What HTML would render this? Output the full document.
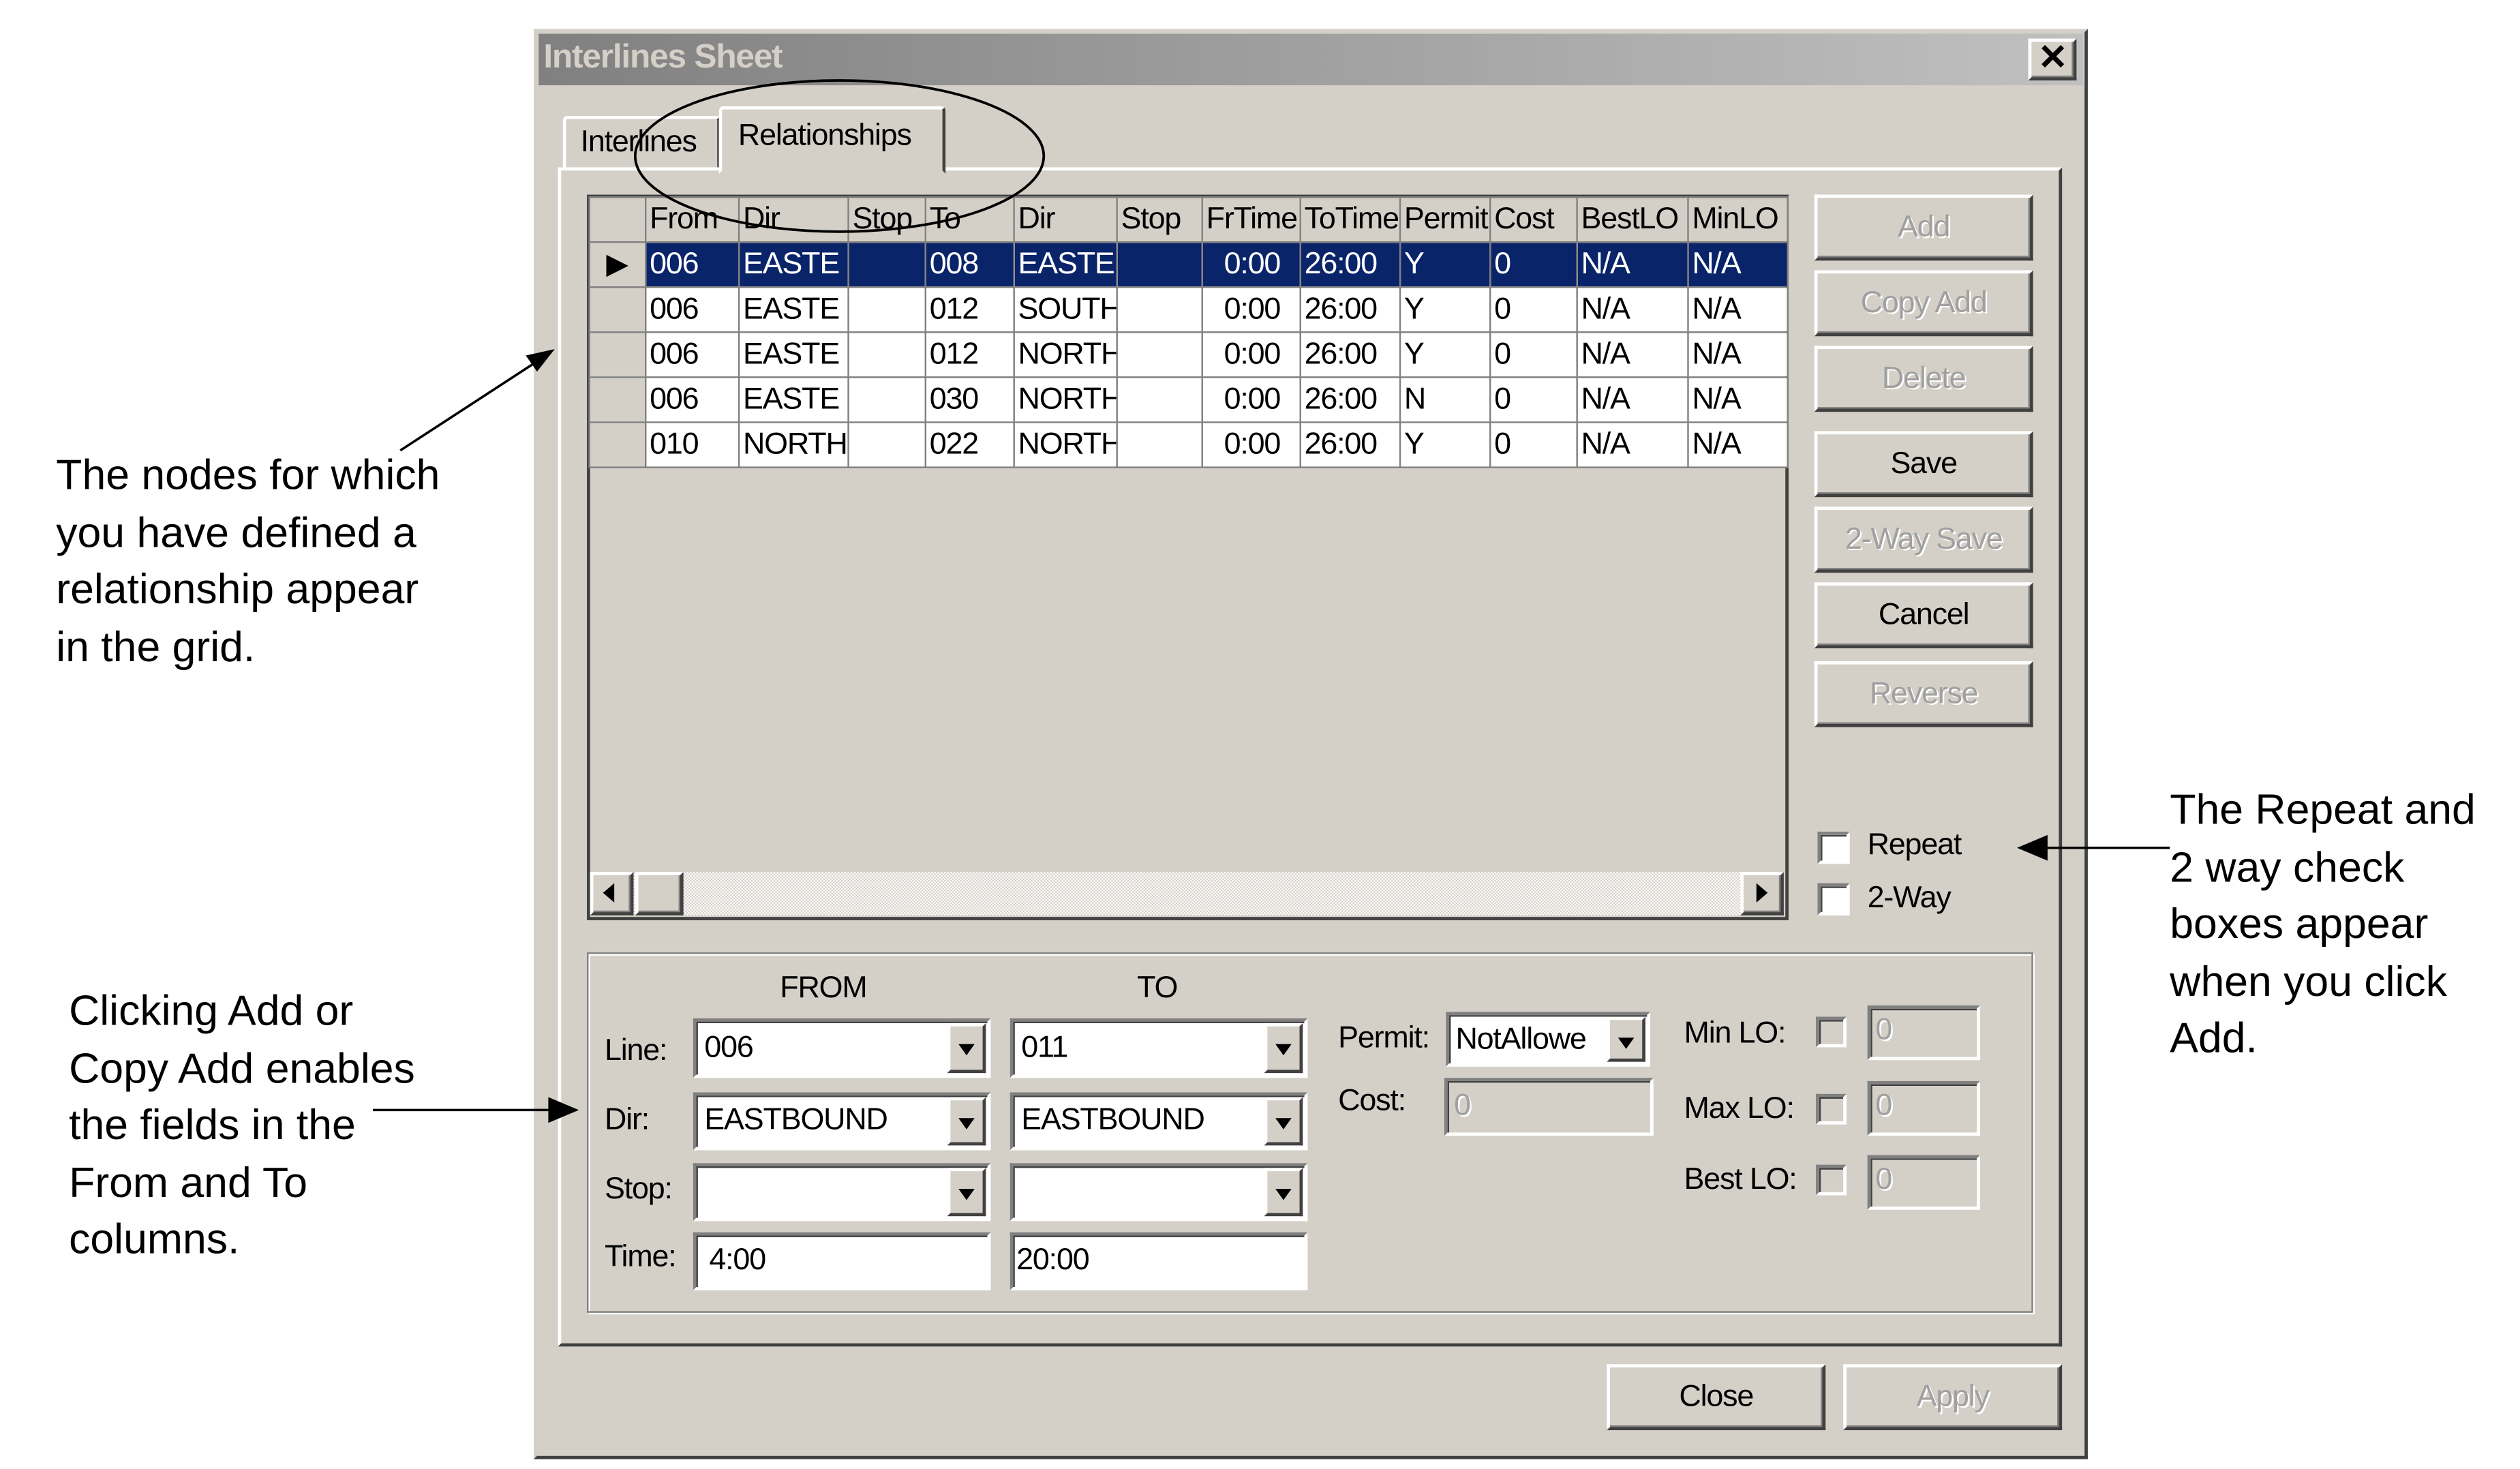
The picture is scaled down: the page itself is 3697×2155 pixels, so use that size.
<!DOCTYPE html>
<html><head><meta charset="utf-8">
<style>
html,body{margin:0;padding:0;background:#fff;overflow:hidden}
body{width:3697px;height:2155px}
#w{position:absolute;left:2px;top:0;width:1560px;height:909px;transform:scale(2.36,2.36);transform-origin:0 0;font-family:"Liberation Sans",sans-serif}
.a{position:absolute;box-sizing:border-box}
.t{position:absolute;white-space:nowrap;font-size:19px;color:#000;letter-spacing:-0.5px}
.btn{position:absolute;box-sizing:border-box;background:#d4d0c8;border:2px solid;border-color:#fff #404040 #404040 #fff;box-shadow:inset -1px -1px 0 #808080;text-align:center;font-size:19px;letter-spacing:-0.5px}
.dis{color:#a0a0a0;text-shadow:1px 1px 0 #fff}
.sunk{position:absolute;box-sizing:border-box;background:#fff;border:2px solid;border-color:#808080 #fff #fff #808080;box-shadow:inset 1px 1px 0 #404040}
.sunk.g{background:#d4d0c8}
.dd{position:absolute;right:1px;top:1px;bottom:1px;width:24px;background:#d4d0c8;border:2px solid;border-color:#fff #404040 #404040 #fff;box-sizing:border-box}
.dd:after{content:"";position:absolute;left:5px;top:11px;border:5px solid transparent;border-top:7px solid #000;border-bottom:0}
.ann{position:absolute;font-size:26.5px;line-height:35.5px;color:#000;white-space:nowrap}
table{border-collapse:collapse;font-size:19px;letter-spacing:-0.5px}
td{border:1px solid #808080;padding:0 0 0 2px;height:28px;overflow:hidden;white-space:nowrap;box-sizing:border-box}
.cb{position:absolute;width:19px;height:19px;box-sizing:border-box;background:#fff;border:2px solid;border-color:#808080 #fff #fff #808080;box-shadow:inset 1px 1px 0 #404040}
.cbg{background:#d4d0c8}
</style></head><body><div id="w">

<div class="a" style="left:331px;top:18px;width:966px;height:889px;background:#d4d0c8;border:2px solid;border-color:#d4d0c8 #404040 #404040 #d4d0c8"></div>
<div class="a" style="left:334px;top:21px;width:960px;height:32px;background:linear-gradient(90deg,#808080,#c0c0c0)"></div>
<div class="t" style="left:337px;top:24px;font-weight:bold;color:#d4d0c8;font-size:21px">Interlines Sheet</div>
<div class="btn" style="left:1260px;top:24px;width:30px;height:26px;font-size:22px;line-height:20px;font-weight:bold">✕</div>

<div class="a" style="left:349px;top:72px;width:98px;height:34px;border:2px solid;border-color:#fff #404040 transparent #fff;border-radius:3px 3px 0 0"></div>
<div class="t" style="left:360px;top:78px">Interlines</div>
<div class="a" style="left:346px;top:104px;width:935px;height:733px;border:2px solid;border-color:#fff #404040 #404040 #fff"></div>
<div class="a" style="left:446px;top:66px;width:141px;height:42px;background:#d4d0c8;border:2px solid;border-color:#fff #404040 transparent #fff;border-radius:3px 3px 0 0"></div>
<div class="t" style="left:458px;top:74px">Relationships</div>

<div class="a" style="left:364px;top:121px;width:747px;height:451px;background:#d4d0c8;border:2px solid #404040"></div>
<table class="a" style="left:365px;top:122px;table-layout:fixed;width:745px">
<colgroup><col style="width:35px"><col style="width:58px"><col style="width:68px"><col style="width:48px"><col style="width:55px"><col style="width:64px"><col style="width:53px"><col style="width:61px"><col style="width:62px"><col style="width:56px"><col style="width:54px"><col style="width:69px"><col style="width:62px"></colgroup>
<tr style="background:#d4d0c8"><td></td><td>From</td><td>Dir</td><td>Stop</td><td>To</td><td>Dir</td><td>Stop</td><td>FrTime</td><td>ToTime</td><td>Permit</td><td>Cost</td><td>BestLO</td><td>MinLO</td></tr>
<tr style="background:#0a246a;color:#fff"><td style="background:#d4d0c8;color:#000;font-size:18px;padding-left:10px">▶</td><td>006</td><td>EASTE</td><td></td><td>008</td><td>EASTE</td><td></td><td style="text-align:right;padding-right:12px">0:00</td><td>26:00</td><td>Y</td><td>0</td><td>N/A</td><td>N/A</td></tr>
<tr style="background:#fff"><td style="background:#d4d0c8"></td><td>006</td><td>EASTE</td><td></td><td>012</td><td>SOUTH</td><td></td><td style="text-align:right;padding-right:12px">0:00</td><td>26:00</td><td>Y</td><td>0</td><td>N/A</td><td>N/A</td></tr>
<tr style="background:#fff"><td style="background:#d4d0c8"></td><td>006</td><td>EASTE</td><td></td><td>012</td><td>NORTH</td><td></td><td style="text-align:right;padding-right:12px">0:00</td><td>26:00</td><td>Y</td><td>0</td><td>N/A</td><td>N/A</td></tr>
<tr style="background:#fff"><td style="background:#d4d0c8"></td><td>006</td><td>EASTE</td><td></td><td>030</td><td>NORTH</td><td></td><td style="text-align:right;padding-right:12px">0:00</td><td>26:00</td><td>N</td><td>0</td><td>N/A</td><td>N/A</td></tr>
<tr style="background:#fff"><td style="background:#d4d0c8"></td><td>010</td><td>NORTH</td><td></td><td>022</td><td>NORTH</td><td></td><td style="text-align:right;padding-right:12px">0:00</td><td>26:00</td><td>Y</td><td>0</td><td>N/A</td><td>N/A</td></tr>
</table>
<div class="a" style="left:366px;top:542px;width:742px;height:27px;background:repeating-conic-gradient(#d4d0c8 0 25%,#fff 0 50%) 0 0/2px 2px"></div>
<div class="btn" style="left:366px;top:542px;width:27px;height:27px"></div>
<div class="a" style="left:374px;top:549px;border:6px solid transparent;border-right:7px solid #000;border-left:0"></div>
<div class="btn" style="left:394px;top:542px;width:30px;height:27px"></div>
<div class="btn" style="left:1081px;top:542px;width:27px;height:27px"></div>
<div class="a" style="left:1091px;top:549px;border:6px solid transparent;border-left:7px solid #000;border-right:0"></div>

<div class="btn dis" style="left:1127px;top:121px;width:136px;height:41px;line-height:37px">Add</div>
<div class="btn dis" style="left:1127px;top:168px;width:136px;height:41px;line-height:37px">Copy Add</div>
<div class="btn dis" style="left:1127px;top:215px;width:136px;height:41px;line-height:37px">Delete</div>
<div class="btn" style="left:1127px;top:268px;width:136px;height:41px;line-height:37px">Save</div>
<div class="btn dis" style="left:1127px;top:315px;width:136px;height:41px;line-height:37px">2-Way Save</div>
<div class="btn" style="left:1127px;top:362px;width:136px;height:41px;line-height:37px">Cancel</div>
<div class="btn dis" style="left:1127px;top:411px;width:136px;height:41px;line-height:37px">Reverse</div>

<div class="cb" style="left:1129px;top:517px;width:20px;height:20px"></div>
<div class="t" style="left:1160px;top:515px">Repeat</div>
<div class="cb" style="left:1129px;top:549px;width:20px;height:20px"></div>
<div class="t" style="left:1160px;top:548px">2-Way</div>

<div class="a" style="left:364px;top:592px;width:899px;height:224px;border:1px solid #808080;box-shadow:1px 1px 0 #fff, inset 1px 1px 0 #fff"></div>
<div class="t" style="left:484px;top:604px">FROM</div>
<div class="t" style="left:706px;top:604px">TO</div>

<div class="t" style="left:375px;top:643px">Line:</div>
<div class="sunk" style="left:430px;top:633px;width:185px;height:37px"><span class="t" style="left:5px;top:6px">006</span><div class="dd"></div></div>
<div class="sunk" style="left:627px;top:633px;width:185px;height:37px"><span class="t" style="left:5px;top:6px">011</span><div class="dd"></div></div>
<div class="t" style="left:375px;top:686px">Dir:</div>
<div class="sunk" style="left:430px;top:679px;width:185px;height:36px"><span class="t" style="left:5px;top:5px">EASTBOUND</span><div class="dd"></div></div>
<div class="sunk" style="left:627px;top:679px;width:185px;height:36px"><span class="t" style="left:5px;top:5px">EASTBOUND</span><div class="dd"></div></div>
<div class="t" style="left:375px;top:729px">Stop:</div>
<div class="sunk" style="left:430px;top:723px;width:185px;height:36px"><div class="dd"></div></div>
<div class="sunk" style="left:627px;top:723px;width:185px;height:36px"><div class="dd"></div></div>
<div class="t" style="left:375px;top:771px">Time:</div>
<div class="sunk" style="left:430px;top:766px;width:185px;height:36px"><span class="t" style="left:8px;top:5px">4:00</span></div>
<div class="sunk" style="left:627px;top:766px;width:185px;height:36px"><span class="t" style="left:2px;top:5px">20:00</span></div>

<div class="t" style="left:831px;top:635px">Permit:</div>
<div class="sunk" style="left:898px;top:629px;width:127px;height:34px"><span class="t" style="left:4px;top:5px">NotAllowe</span><div class="dd"></div></div>
<div class="t" style="left:831px;top:674px">Cost:</div>
<div class="sunk g" style="left:897px;top:670px;width:130px;height:36px"><span class="t dis" style="left:4px;top:5px">0</span></div>

<div class="t" style="left:1046px;top:632px">Min LO:</div>
<div class="cb cbg" style="left:1128px;top:632px"></div>
<div class="sunk g" style="left:1160px;top:625px;width:70px;height:34px"><span class="t dis" style="left:3px;top:3px">0</span></div>
<div class="t" style="left:1046px;top:679px">Max LO:</div>
<div class="cb cbg" style="left:1128px;top:680px"></div>
<div class="sunk g" style="left:1160px;top:672px;width:70px;height:34px"><span class="t dis" style="left:3px;top:3px">0</span></div>
<div class="t" style="left:1046px;top:723px">Best LO:</div>
<div class="cb cbg" style="left:1128px;top:724px"></div>
<div class="sunk g" style="left:1160px;top:718px;width:70px;height:34px"><span class="t dis" style="left:3px;top:3px">0</span></div>

<div class="btn" style="left:998px;top:848px;width:136px;height:41px;line-height:37px">Close</div>
<div class="btn dis" style="left:1145px;top:848px;width:136px;height:41px;line-height:37px">Apply</div>

<svg class="a" style="left:0;top:0" width="1560" height="909" viewBox="0 0 1560 909">
<ellipse cx="521" cy="97" rx="127" ry="47" fill="none" stroke="#000" stroke-width="1.6"/>
<line x1="248" y1="280" x2="334" y2="224" stroke="#000" stroke-width="1.5"/>
<polygon points="344,217 326,221 333,231" fill="#000"/>
<line x1="1348" y1="527" x2="1268" y2="527" stroke="#000" stroke-width="1.5"/>
<polygon points="1253,527 1272,519 1272,535" fill="#000"/>
<line x1="231" y1="690" x2="344" y2="690" stroke="#000" stroke-width="1.5"/>
<polygon points="359,690 340,682 340,698" fill="#000"/>
</svg>
<div class="ann" style="left:34px;top:278px">The nodes for which<br>you have defined a<br>relationship appear<br>in the grid.</div>
<div class="ann" style="left:1348px;top:486px">The Repeat and<br>2 way check<br>boxes appear<br>when you click<br>Add.</div>
<div class="ann" style="left:42px;top:611px">Clicking Add or<br>Copy Add enables<br>the fields in the<br>From and To<br>columns.</div>
</div></body></html>
